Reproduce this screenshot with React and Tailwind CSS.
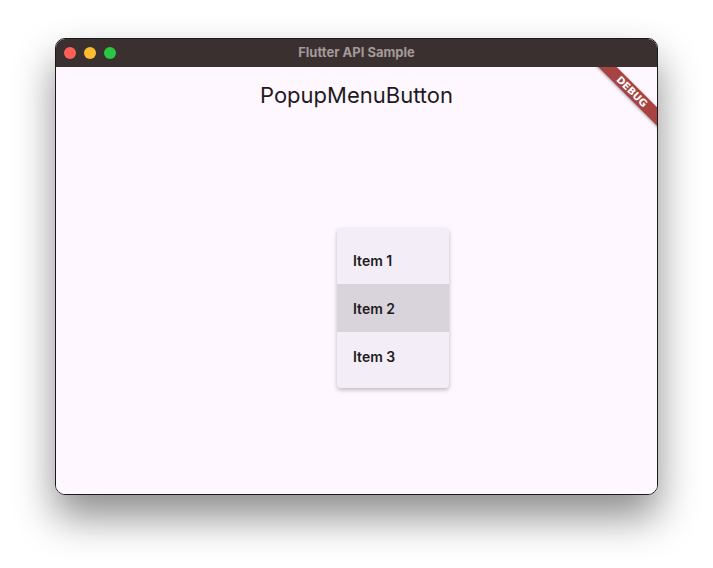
import React, { useState } from "react";

const items = ["Item 1", "Item 2", "Item 3"];

const TrafficLights = () => (
  <div className="flex items-center gap-[8px] pl-[8px]">
    <span className="block h-[12px] w-[12px] rounded-full bg-[#fe5f57]" />
    <span className="block h-[12px] w-[12px] rounded-full bg-[#febc2e]" />
    <span className="block h-[12px] w-[12px] rounded-full bg-[#28c840]" />
  </div>
);

const DebugBanner = () => (
  <div className="pointer-events-none absolute right-[-35px] top-[18px] flex h-[13px] w-[120px] rotate-45 items-center justify-center bg-[#a84342] shadow-[0_1px_3px_rgba(0,0,0,0.35)]">
    <span className="font-['DejaVu_Sans',sans-serif] text-[10px] font-black leading-none text-white">
      DEBUG
    </span>
  </div>
);

const App = () => {
  const [hovered, setHovered] = useState(1);

  return (
    <div className="h-[568px] w-[713px] bg-white pl-[55px] pt-[38px] font-['Inter',sans-serif]">
      <div className="flex h-[457px] w-[603px] flex-col overflow-hidden rounded-[10px] border border-[#1a1a1a] shadow-[0_22px_40px_rgba(0,0,0,0.45)]">
        {/* title bar */}
        <div className="relative flex h-[28px] shrink-0 items-center bg-[#3b3030]">
          <TrafficLights />
          <div className="absolute inset-0 flex items-center justify-center text-[13px] font-bold text-[#a39a9a]">
            Flutter API Sample
          </div>
        </div>

        {/* app body */}
        <div className="relative flex-1 overflow-hidden bg-[#fef7ff]">
          <div className="flex h-[56px] items-center justify-center">
            <h1 className="text-[22px] font-normal text-[#1d1b20]">PopupMenuButton</h1>
          </div>

          {/* open popup menu */}
          <div className="absolute left-[281px] top-[161px] w-[112px] rounded-[4px] bg-[#f3edf7] py-[8px] shadow-[0_2px_4px_rgba(0,0,0,0.25)]">
            {items.map((label, i) => (
              <div
                key={label}
                onMouseEnter={() => setHovered(i)}
                className={`flex h-[48px] items-center px-[16px] text-[14px] font-semibold text-[#1d1b20] ${
                  hovered === i ? "bg-[#d9d3dc]" : ""
                }`}
              >
                {label}
              </div>
            ))}
          </div>

          <DebugBanner />
        </div>
      </div>
    </div>
  );
};

export default App;
